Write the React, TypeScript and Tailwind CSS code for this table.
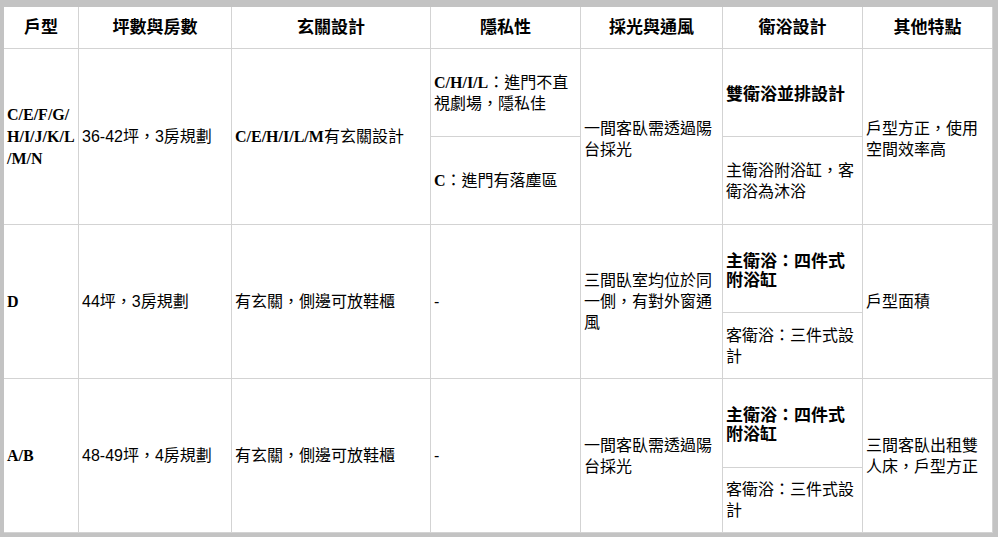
import React from "react";

const REG = "font-['Liberation_Sans','Noto_Sans_CJK_TC',sans-serif] text-[16px] leading-[21px] font-normal text-black";
const B = "font-['Liberation_Serif','Noto_Sans_CJK_TC',serif] font-bold";

function Cell({ className = "", children }: { className?: string; children: React.ReactNode }) {
  return (
    <div className={`bg-white flex items-center px-[3px] ${REG} ${className}`}>
      <div>{children}</div>
    </div>
  );
}

function Head({ className = "", children }: { className?: string; children: React.ReactNode }) {
  return (
    <div className={`bg-white flex items-center justify-center text-[17px] leading-[20px] text-black ${B} ${className}`}>
      {children}
    </div>
  );
}

const Bold = ({ children }: { children: React.ReactNode }) => <span className={B}>{children}</span>;

export default function App() {
  return (
    <div className="w-[998px] h-[537px] bg-[#c3c3c3] pt-[7px] pl-[4px] pr-[5px] pb-[4px]">
      <div className="grid grid-cols-[74px_152px_198px_149px_141px_139px_129px] grid-rows-[41px_87px_87px_87px_65px_88px_64px] gap-px bg-[#d3d3d3] pr-px pb-px">
        <Head className="col-start-1 row-start-1">戶型</Head>
        <Head className="col-start-2 row-start-1">坪數與房數</Head>
        <Head className="col-start-3 row-start-1">玄關設計</Head>
        <Head className="col-start-4 row-start-1">隱私性</Head>
        <Head className="col-start-5 row-start-1">採光與通風</Head>
        <Head className="col-start-6 row-start-1">衛浴設計</Head>
        <Head className="col-start-7 row-start-1">其他特點</Head>

        {/* Row 1 */}
        <Cell className="col-start-1 row-start-2 row-span-2">
          <div className={`${B} leading-[22px]`}>C/E/F/G/<br />H/I/J/K/L<br />/M/N</div>
        </Cell>
        <Cell className="col-start-2 row-start-2 row-span-2">36-42坪，3房規劃</Cell>
        <Cell className="col-start-3 row-start-2 row-span-2"><Bold>C/E/H/I/L/M</Bold>有玄關設計</Cell>
        <Cell className="col-start-4 row-start-2"><Bold>C/H/I/L</Bold>：進門不直<br />視劇場，隱私佳</Cell>
        <Cell className="col-start-4 row-start-3"><Bold>C</Bold>：進門有落塵區</Cell>
        <Cell className="col-start-5 row-start-2 row-span-2 pt-[4px]">一間客臥需透過陽<br />台採光</Cell>
        <Cell className="col-start-6 row-start-2 pt-[4px]"><div className={`${B} text-[17px] leading-[19px]`}>雙衛浴並排設計</div></Cell>
        <Cell className="col-start-6 row-start-3">主衛浴附浴缸，客<br />衛浴為沐浴</Cell>
        <Cell className="col-start-7 row-start-2 row-span-2 pt-[4px]">戶型方正，使用<br />空間效率高</Cell>

        {/* Row 2 */}
        <Cell className="col-start-1 row-start-4 row-span-2"><Bold>D</Bold></Cell>
        <Cell className="col-start-2 row-start-4 row-span-2">44坪，3房規劃</Cell>
        <Cell className="col-start-3 row-start-4 row-span-2">有玄關，側邊可放鞋櫃</Cell>
        <Cell className="col-start-4 row-start-4 row-span-2">-</Cell>
        <Cell className="col-start-5 row-start-4 row-span-2">三間臥室均位於同<br />一側，有對外窗通<br />風</Cell>
        <Cell className="col-start-6 row-start-4 pt-[4px]"><div className={`${B} text-[17px] leading-[19px]`}>主衛浴：四件式<br />附浴缸</div></Cell>
        <Cell className="col-start-6 row-start-5">客衛浴：三件式設<br />計</Cell>
        <Cell className="col-start-7 row-start-4 row-span-2">戶型面積</Cell>

        {/* Row 3 */}
        <Cell className="col-start-1 row-start-6 row-span-2"><Bold>A/B</Bold></Cell>
        <Cell className="col-start-2 row-start-6 row-span-2">48-49坪，4房規劃</Cell>
        <Cell className="col-start-3 row-start-6 row-span-2">有玄關，側邊可放鞋櫃</Cell>
        <Cell className="col-start-4 row-start-6 row-span-2">-</Cell>
        <Cell className="col-start-5 row-start-6 row-span-2">一間客臥需透過陽<br />台採光</Cell>
        <Cell className="col-start-6 row-start-6 pt-[4px]"><div className={`${B} text-[17px] leading-[19px]`}>主衛浴：四件式<br />附浴缸</div></Cell>
        <Cell className="col-start-6 row-start-7">客衛浴：三件式設<br />計</Cell>
        <Cell className="col-start-7 row-start-6 row-span-2">三間客臥出租雙<br />人床，戶型方正</Cell>
      </div>
    </div>
  );
}
